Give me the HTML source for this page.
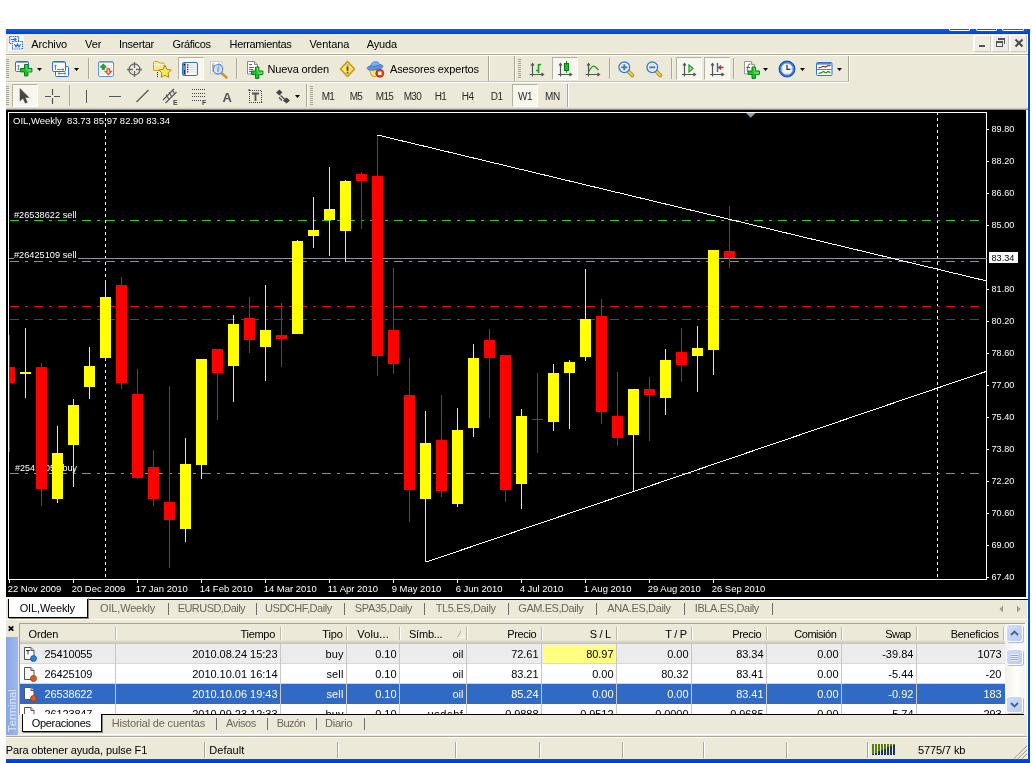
<!DOCTYPE html>
<html lang="es"><head><meta charset="utf-8"><title>MetaTrader - OIL,Weekly</title>
<style>
html,body{margin:0;padding:0}
body{width:1032px;height:763px;overflow:hidden;position:relative;background:#fff;font-family:'Liberation Sans',sans-serif;}
.t{position:absolute;white-space:pre;line-height:normal}
.r{position:absolute}
svg{position:absolute;overflow:visible}
</style></head><body>
<div id="w" style="position:absolute;left:0;top:0;width:1032px;height:763px;will-change:transform">

<div class="r" style="left:6px;top:29px;width:1024px;height:734px;background:#ece9d8;"></div>
<div class="r" style="left:6px;top:29px;width:1024px;height:5px;background:linear-gradient(#0a5cf0,#0050e0 60%,#0043c8);"></div>
<div class="r" style="left:949px;top:29px;width:21px;height:2px;background:#0b53e0;border:1px solid #fff;border-top:none;border-radius:0 0 3px 3px;box-sizing:border-box"></div>
<div class="r" style="left:976px;top:29px;width:21px;height:2px;background:#0b53e0;border:1px solid #fff;border-top:none;border-radius:0 0 3px 3px;box-sizing:border-box"></div>
<div class="r" style="left:1002px;top:29px;width:22px;height:2px;background:#c23a10;border:1px solid #fff;border-top:none;border-radius:0 0 3px 3px;box-sizing:border-box"></div>
<div class="r" style="left:1027px;top:34px;width:1px;height:725px;background:#fff;"></div>
<div class="r" style="left:1028px;top:29px;width:2px;height:734px;background:#0046e0;"></div>
<div class="r" style="left:6px;top:759px;width:1024px;height:4px;background:linear-gradient(#0a4fe6,#0038b8);"></div>
<div class="r" style="left:6px;top:53px;width:1022px;height:1px;background:#fff;"></div>
<div class="r" style="left:6px;top:54px;width:1022px;height:1px;background:#aca899;"></div>
<div class="r" style="left:6px;top:55px;width:1022px;height:1px;background:#fff;"></div>
<svg style="left:8px;top:35px" width="16" height="16" viewBox="0 0 16 16">
<rect width="16" height="16" fill="#fbfbf8"/>
<rect x="1.5" y="1.5" width="9" height="7" fill="#eef4ff" stroke="#2d6de0" stroke-width="1.200" stroke-dasharray="1.2 .6"/>
<path d="M3 4.5h5M6.5 3l1.5 1.5L6.5 6" stroke="#2d6de0" stroke-width="1.200" fill="none" stroke-width=".9"/>
<rect x="4.5" y="6.5" width="10" height="7.5" fill="#fff" stroke="#2d6de0" stroke-width="1.200" stroke-dasharray="1.2 .6"/>
<path d="M6.5 9l1.5 3 1.5-3 1.5 3 1.5-3" stroke="#2d6de0" stroke-width="1.200" fill="none" stroke-width=".9"/>
</svg>
<span class="t" style="left:31.30px;top:38px;font-size:11px;color:#000;letter-spacing:-0.140px;">Archivo</span>
<span class="t" style="left:85.00px;top:38px;font-size:11px;color:#000;letter-spacing:-0.004px;">Ver</span>
<span class="t" style="left:119.00px;top:38px;font-size:11px;color:#000;letter-spacing:-0.287px;">Insertar</span>
<span class="t" style="left:172.50px;top:38px;font-size:11px;color:#000;letter-spacing:-0.344px;">Gráficos</span>
<span class="t" style="left:229.60px;top:38px;font-size:11px;color:#000;letter-spacing:-0.360px;">Herramientas</span>
<span class="t" style="left:309.40px;top:38px;font-size:11px;color:#000;letter-spacing:-0.054px;">Ventana</span>
<span class="t" style="left:366.70px;top:38px;font-size:11px;color:#000;letter-spacing:-0.159px;">Ayuda</span>
<div class="r" style="left:973px;top:35px;width:18px;height:17px;box-sizing:border-box;background:#efede3;border:1px solid;border-color:#fff #cfccbb #cfccbb #fff;border-left-width:2px"></div>
<div class="r" style="left:979px;top:45px;width:6px;height:2px;background:#555;"></div>
<div class="r" style="left:991px;top:35px;width:18px;height:17px;box-sizing:border-box;background:#efede3;border:1px solid;border-color:#fff #cfccbb #cfccbb #fff;border-left-width:2px"></div>
<svg style="left:991px;top:35px" width="16" height="16" shape-rendering="crispEdges"><path d="M7 3h7v2h-7zM13 5h1v4h-1zM5 6h7v2h-7zM5 8h1v4h-1zM11 8h1v4h-1zM5 11h7v1h-7z" fill="#555"/></svg>
<div class="r" style="left:1009px;top:35px;width:18px;height:17px;box-sizing:border-box;background:#efede3;border:1px solid;border-color:#fff #cfccbb #cfccbb #fff;border-left-width:2px"></div>
<svg style="left:1011px;top:35px" width="16" height="16"><path d="M4.500 4.500l7 7M11.500 4.500l-7 7" stroke="#4a4a4a" stroke-width="2"/></svg>
<div class="r" style="left:6px;top:81px;width:843px;height:1px;background:#c5c2b2;"></div>
<div class="r" style="left:6px;top:82px;width:844px;height:1px;background:#fff;"></div>
<div class="r" style="left:6px;top:59px;width:3px;height:19px;background:repeating-linear-gradient(#a9a793 0 1px,#ece9d8 1px 2px)"></div>
<div class="r" style="left:6px;top:86px;width:3px;height:19px;background:repeating-linear-gradient(#a9a793 0 1px,#ece9d8 1px 2px)"></div>
<div class="r" style="left:88px;top:58px;width:1px;height:21px;background:#aca899;"></div>
<div class="r" style="left:89px;top:58px;width:1px;height:21px;background:#f3f1e6;"></div>
<div class="r" style="left:236px;top:58px;width:1px;height:21px;background:#aca899;"></div>
<div class="r" style="left:237px;top:58px;width:1px;height:21px;background:#f3f1e6;"></div>
<div class="r" style="left:488px;top:56px;width:1px;height:25px;background:#aca899;"></div>
<div class="r" style="left:489px;top:56px;width:1px;height:25px;background:#fff;"></div>
<div class="r" style="left:514px;top:56px;width:1px;height:25px;background:#aca899;"></div>
<div class="r" style="left:515px;top:56px;width:1px;height:25px;background:#fff;"></div>
<div class="r" style="left:518px;top:59px;width:3px;height:19px;background:repeating-linear-gradient(#a9a793 0 1px,#ece9d8 1px 2px)"></div>
<div class="r" style="left:609px;top:58px;width:1px;height:21px;background:#aca899;"></div>
<div class="r" style="left:610px;top:58px;width:1px;height:21px;background:#f3f1e6;"></div>
<div class="r" style="left:671px;top:58px;width:1px;height:21px;background:#aca899;"></div>
<div class="r" style="left:672px;top:58px;width:1px;height:21px;background:#f3f1e6;"></div>
<div class="r" style="left:733px;top:58px;width:1px;height:21px;background:#aca899;"></div>
<div class="r" style="left:734px;top:58px;width:1px;height:21px;background:#f3f1e6;"></div>
<div class="r" style="left:848px;top:56px;width:1px;height:26px;background:#aca899;"></div>
<div class="r" style="left:849px;top:56px;width:1px;height:26px;background:#fff;"></div>
<div class="r" style="left:69px;top:85px;width:1px;height:21px;background:#aca899;"></div>
<div class="r" style="left:70px;top:85px;width:1px;height:21px;background:#f3f1e6;"></div>
<div class="r" style="left:306px;top:84px;width:1px;height:24px;background:#aca899;"></div>
<div class="r" style="left:307px;top:84px;width:1px;height:24px;background:#fff;"></div>
<div class="r" style="left:310px;top:86px;width:3px;height:19px;background:repeating-linear-gradient(#a9a793 0 1px,#ece9d8 1px 2px)"></div>
<div class="r" style="left:567px;top:84px;width:1px;height:24px;background:#aca899;"></div>
<div class="r" style="left:568px;top:84px;width:1px;height:24px;background:#fff;"></div>
<div class="r" style="left:178px;top:57px;width:26px;height:23px;box-sizing:border-box;border:1px solid;border-color:#b5b2a0 #fff #fff #b5b2a0;background:#f7f6ef"></div>
<div class="r" style="left:552px;top:57px;width:26px;height:23px;box-sizing:border-box;border:1px solid;border-color:#b5b2a0 #fff #fff #b5b2a0;background:#f7f6ef"></div>
<div class="r" style="left:676px;top:57px;width:26px;height:23px;box-sizing:border-box;border:1px solid;border-color:#b5b2a0 #fff #fff #b5b2a0;background:#f7f6ef"></div>
<div class="r" style="left:704px;top:57px;width:26px;height:23px;box-sizing:border-box;border:1px solid;border-color:#b5b2a0 #fff #fff #b5b2a0;background:#f7f6ef"></div>
<div class="r" style="left:12px;top:84px;width:26px;height:23px;box-sizing:border-box;border:1px solid;border-color:#b5b2a0 #fff #fff #b5b2a0;background:#f7f6ef"></div>
<div class="r" style="left:512px;top:84px;width:26px;height:23px;box-sizing:border-box;border:1px solid;border-color:#b5b2a0 #fff #fff #b5b2a0;background:#f7f6ef"></div>
<svg style="left:37px;top:68px" width="5" height="3"><path d="M0 0h5L2.5 3z" fill="#000"/></svg>
<svg style="left:74px;top:68px" width="5" height="3"><path d="M0 0h5L2.5 3z" fill="#000"/></svg>
<svg style="left:763px;top:68px" width="5" height="3"><path d="M0 0h5L2.5 3z" fill="#000"/></svg>
<svg style="left:800px;top:68px" width="5" height="3"><path d="M0 0h5L2.5 3z" fill="#000"/></svg>
<svg style="left:837px;top:68px" width="5" height="3"><path d="M0 0h5L2.5 3z" fill="#000"/></svg>
<svg style="left:295px;top:95px" width="5" height="3"><path d="M0 0h5L2.5 3z" fill="#000"/></svg>
<span class="t" style="left:267.50px;top:63px;font-size:11px;color:#000;letter-spacing:-0.135px;">Nueva orden</span>
<span class="t" style="left:390.00px;top:63px;font-size:11px;color:#000;letter-spacing:-0.124px;">Asesores expertos</span>
<span class="t" style="left:321.70px;top:91px;font-size:10px;color:#2a2a2a;letter-spacing:-0.796px;">M1</span>
<span class="t" style="left:349.70px;top:91px;font-size:10px;color:#2a2a2a;letter-spacing:-0.796px;">M5</span>
<span class="t" style="left:375.80px;top:91px;font-size:10px;color:#2a2a2a;letter-spacing:-0.751px;">M15</span>
<span class="t" style="left:403.70px;top:91px;font-size:10px;color:#2a2a2a;letter-spacing:-0.718px;">M30</span>
<span class="t" style="left:434.70px;top:91px;font-size:10px;color:#2a2a2a;letter-spacing:-0.742px;">H1</span>
<span class="t" style="left:461.70px;top:91px;font-size:10px;color:#2a2a2a;letter-spacing:-0.392px;">H4</span>
<span class="t" style="left:490.80px;top:91px;font-size:10px;color:#2a2a2a;letter-spacing:-0.542px;">D1</span>
<span class="t" style="left:518.00px;top:91px;font-size:10px;color:#2a2a2a;letter-spacing:-0.500px;">W1</span>
<span class="t" style="left:545.00px;top:91px;font-size:10px;color:#2a2a2a;letter-spacing:-0.426px;">MN</span>
<svg style="left:15px;top:60px" width="18" height="18" viewBox="0 0 18 18"><rect x=".5" y="1.5" width="13" height="10" rx="1" fill="#fff" stroke="#2f6fcc"/><rect x="1" y="2" width="12" height="1" fill="#7aa8ea"/><path d="M3.5 5v5M2.3 6.3l1.2-1.3 1.2 1.3M2.3 8.8l1.2 1.2 1.2-1.2" stroke="#5577aa" fill="none" stroke-width=".9"/><g transform="translate(5.5 4.5) scale(1)"><path d="M4 0h3.400v4H11.400v3.400H7.400v4H4v-4H0V4h4z" fill="#1fc02a" stroke="#0b7d14" stroke-width="1" stroke-linejoin="round"/><path d="M5 1.200h1.400v4H10.400v1.400H6.400" fill="none" stroke="#7dfa86" stroke-width=".9" opacity=".8"/></g></svg>
<svg style="left:52px;top:60px" width="18" height="18" viewBox="0 0 18 18"><rect x="3.5" y="6.5" width="13" height="10" rx="1" fill="#fff" stroke="#2f6fcc"/><rect x=".5" y="1.5" width="13" height="10" rx="1" fill="#fff" stroke="#2f6fcc"/><rect x="1" y="2" width="12" height="1" fill="#7aa8ea"/><path d="M3.5 5v5M2.3 6.2l1.2-1.2 1.2 1.2M5 9.5h7M10.5 8.3l1.5 1.2-1.5 1.2M6 13.5h8M7.5 12.3L6 13.5l1.500 1.2M12.5 12.300l1.500 1.2-1.500 1.2" stroke="#5577aa" fill="none" stroke-width=".9"/></svg>
<svg style="left:98px;top:60px" width="17" height="18" viewBox="0 0 17 18"><rect x=".5" y="1.500" width="15" height="15" rx="1.500" fill="#fff" stroke="#5a97e6"/><rect x="1" y="2" width="14" height="1" fill="#8db7f0"/><path d="M9 5.500h5M9 7.500h5M2 11.500h5M2 13.500h5M9 13.500h5" stroke="#d8d8d8" stroke-width=".8" stroke-dasharray="2 1"/><path d="M5.300 3.800l3.200 3.400h-1.900v2.300h-2.600v-2.300h-1.900z" fill="#1fa82a" stroke="#0a7a12" stroke-width=".6"/><path d="M10.300 14.600l-3.200-3.400h1.900v-2.300h2.600v2.300h1.900z" fill="#f6c8b4" stroke="#e04a1a" stroke-width="1.100"/></svg>
<svg style="left:126px;top:61px" width="17" height="17" viewBox="0 0 17 17"><circle cx="8.500" cy="8.500" r="5.500" fill="none" stroke="#6a6a6a" stroke-width="1.300"/><path d="M8.500 1v6M8.500 10v6M1 8.500h6M10 8.500h6" stroke="#6a6a6a" stroke-width="1.300"/></svg>
<svg style="left:153px;top:60px" width="19" height="18" viewBox="0 0 19 18"><path d="M.5 10.500v-8q0-1 1-1h3.500l1.500 1.500h3.500q1 0 1 1v6.500z" fill="#ffe98a" stroke="#c9a227"/><path d="M1 4.500h9.500" stroke="#fff8d0"/><path d="M4.500 12v5.500" stroke="#222" stroke-dasharray="1 1"/><path d="M12 5.500l1.900 3.900 4.300.6-3.100 3 .7 4.300-3.800-2-3.800 2 .7-4.300-3.100-3 4.300-.6z" fill="#ffe95a" stroke="#b8860b" stroke-width="1"/></svg>
<svg style="left:182px;top:62px" width="16" height="14" viewBox="0 0 16 14"><rect x=".5" y=".5" width="15" height="13" rx="1.500" fill="#fff" stroke="#2f6fd0"/><rect x="1" y="1" width="3" height="12" fill="#5a92e2"/><path d="M4.500 3h10.500M4.500 5.300h10.500M4.500 7.600h10.500M4.500 9.900h10.500" stroke="#b4ccf6" stroke-width=".7"/><rect x="1.800" y="2" width="1.300" height="1.300" fill="#000"/><rect x="5" y="2.200" width="1.400" height="1.400" fill="#e00"/><rect x="5" y="4.500" width="1.300" height="1.300" fill="#222"/><rect x="5" y="6.800" width="1.300" height="1.300" fill="#222"/><rect x="5" y="9.100" width="1.400" height="1.400" fill="#e00"/><rect x="2" y="8" width="1" height="4" fill="#234"/></svg>
<svg style="left:210px;top:60px" width="19" height="19" viewBox="0 0 19 19"><rect x=".5" y="1.500" width="11.500" height="12.500" fill="#fbfbfb" stroke="#cdcdc8"/><path d="M3 3v9M9 3v8M2 6h3M8 4.500h3" stroke="#7788aa" stroke-width=".9"/><path d="M12 13.500l4.500 4" stroke="#c79a2a" stroke-width="2.600" stroke-linecap="round"/><circle cx="8" cy="9.300" r="4.700" fill="#cfe0fa" fill-opacity=".85" stroke="#5a92e2" stroke-width="1.300"/><rect x="7" y="6.500" width="2.200" height="5.500" fill="#9ab0d8"/></svg>
<svg style="left:246px;top:60px" width="18" height="19" viewBox="0 0 18 19"><path d="M1.500 1.500h7l3 3v9.500h-10z" fill="#fff" stroke="#888"/><path d="M8.500 1.500v3h3" fill="#ddd" stroke="#888"/><path d="M3 4.500h3M3 7.500h5M3 9.500h4M3 11.500h2" stroke="#666" stroke-width="1"/><g transform="translate(5.5 7) scale(1)"><path d="M4 0h3.400v4H11.400v3.400H7.400v4H4v-4H0V4h4z" fill="#1fc02a" stroke="#0b7d14" stroke-width="1" stroke-linejoin="round"/><path d="M5 1.200h1.400v4H10.400v1.400H6.400" fill="none" stroke="#7dfa86" stroke-width=".9" opacity=".8"/></g></svg>
<svg style="left:339px;top:60px" width="17" height="18" viewBox="0 0 17 18"><path d="M8.500 1.500l7 7.500-7 7.500-7-7.500z" fill="#f7e254" stroke="#c29c1c" stroke-width="1.700" stroke-linejoin="round"/><path d="M8.500 3.800l4.800 5.200-4.800 5.200-4.800-5.200z" fill="none" stroke="#fff6b0" stroke-width=".7"/><rect x="7.700" y="4.300" width="1.700" height="2.500" fill="#999"/><rect x="7.700" y="6.800" width="1.700" height="4" fill="#8a2a1a"/><rect x="7.700" y="11.800" width="1.700" height="1.800" fill="#8a2a1a"/></svg>
<svg style="left:366px;top:60px" width="19" height="19" viewBox="0 0 19 19"><path d="M2.500 8.500h11l-3.500 7.500q-2 1.500-4 0z" fill="#fbe670" stroke="#c9a227"/><ellipse cx="9" cy="7.300" rx="8" ry="2.700" fill="#5a94e0" stroke="#3c78cc" stroke-width=".8" transform="rotate(-8 9 7.300)"/><path d="M5 6.500q0-4.500 4.200-4.800t4.300 3.800z" fill="#7fb0ee" stroke="#3c78cc" stroke-width=".8"/><circle cx="13.800" cy="13.300" r="4" fill="#e8401a" stroke="#b03008" stroke-width=".8"/><rect x="12.100" y="11.600" width="3.400" height="3.400" fill="#fff"/></svg>
<svg style="left:529px;top:61px" width="16" height="16" viewBox="0 0 16 16"><path d="M3.500 2.500v13M1 13.500h13.500M2 4.500l1.500-2 1.500 2M12.500 12l2 1.500-2 1.500" stroke="#555" fill="none" stroke-width="1.200"/><path d="M9.500 3v9M9.500 3.500h2.500M7 9.500h2.500" stroke="#18a020" stroke-width="1.600" fill="none"/></svg>
<svg style="left:557px;top:61px" width="16" height="16" viewBox="0 0 16 16"><path d="M3.500 2.500v13M1 13.500h13.500M2 4.500l1.500-2 1.500 2M12.500 12l2 1.500-2 1.500" stroke="#555" fill="none" stroke-width="1.200"/><path d="M9.500 0v12" stroke="#18a020" stroke-width="1.200"/><rect x="7.500" y="2.500" width="4" height="7" fill="#22b82c" stroke="#0a7a12"/></svg>
<svg style="left:585px;top:61px" width="16" height="16" viewBox="0 0 16 16"><path d="M3.500 2.500v13M1 13.500h13.500M2 4.500l1.500-2 1.500 2M12.500 12l2 1.500-2 1.500" stroke="#555" fill="none" stroke-width="1.200"/><path d="M3.500 11q4-7.500 6.500-5.500l3.500 3.500" stroke="#18a020" stroke-width="1.300" fill="none"/></svg>
<svg style="left:618px;top:60px" width="18" height="18" viewBox="0 0 18 18"><path d="M10.500 11.500l3.800 3.800" stroke="#a8821a" stroke-width="3.800" stroke-linecap="round"/><path d="M10.500 11.500l3.800 3.800" stroke="#f0d040" stroke-width="2.200" stroke-linecap="round"/><circle cx="6.300" cy="7.300" r="5.300" fill="#dbe7fb" stroke="#3a7ae0" stroke-width="1.400"/><circle cx="6.300" cy="7.300" r="4" fill="none" stroke="#f4f8ff" stroke-width=".8"/><path d="M3.300 7.300h6" stroke="#4a7a98" stroke-width="1.800"/><path d="M6.300 4.300v6" stroke="#4a7a98" stroke-width="1.800"/></svg>
<svg style="left:646px;top:60px" width="18" height="18" viewBox="0 0 18 18"><path d="M10.500 11.500l3.800 3.800" stroke="#a8821a" stroke-width="3.800" stroke-linecap="round"/><path d="M10.500 11.500l3.800 3.800" stroke="#f0d040" stroke-width="2.200" stroke-linecap="round"/><circle cx="6.300" cy="7.300" r="5.300" fill="#dbe7fb" stroke="#3a7ae0" stroke-width="1.400"/><circle cx="6.300" cy="7.300" r="4" fill="none" stroke="#f4f8ff" stroke-width=".8"/><path d="M3.300 7.300h6" stroke="#4a7a98" stroke-width="1.800"/></svg>
<svg style="left:681px;top:61px" width="16" height="16" viewBox="0 0 16 16"><path d="M3.500 2.500v13M1 13.500h13.500M2 4.500l1.500-2 1.500 2M12.500 12l2 1.500-2 1.500" stroke="#555" fill="none" stroke-width="1.200"/><path d="M8 4l4 3.500-4 3.500z" fill="#bfe8c0" stroke="#18a020" stroke-width="1.200"/></svg>
<svg style="left:709px;top:61px" width="16" height="16" viewBox="0 0 16 16"><path d="M3.500 2.500v13M1 13.500h13.500M2 4.500l1.500-2 1.500 2M12.500 12l2 1.500-2 1.500" stroke="#555" fill="none" stroke-width="1.200"/><path d="M8.500 2v9" stroke="#2a6ab0" stroke-width="1.400"/><path d="M14.500 6.500h-4.500M12 4.500l-2.200 2 2.200 2" stroke="#c03010" stroke-width="1.300" fill="none"/></svg>
<svg style="left:743px;top:60px" width="18" height="19" viewBox="0 0 18 19"><path d="M1.500 1.500h7l3 3v9.500h-10z" fill="#fff" stroke="#999"/><path d="M8.500 1.500v3h3" fill="#e4e4e4" stroke="#999"/><path d="M5 11.500q-1.500 0-.5-3l.8-3q.6-2 2.200-1.500M3.500 7.500h3.500" stroke="#555" fill="none" stroke-width="1"/><g transform="translate(5 7) scale(1)"><path d="M4 0h3.400v4H11.400v3.400H7.400v4H4v-4H0V4h4z" fill="#1fc02a" stroke="#0b7d14" stroke-width="1" stroke-linejoin="round"/><path d="M5 1.200h1.400v4H10.400v1.400H6.400" fill="none" stroke="#7dfa86" stroke-width=".9" opacity=".8"/></g></svg>
<svg style="left:778px;top:60px" width="18" height="18" viewBox="0 0 18 18"><circle cx="9" cy="9" r="8" fill="#2f74e0" stroke="#1a4fb0"/><circle cx="9" cy="9" r="5.800" fill="#f4f6fb" stroke="#9ab8ee" stroke-width=".8"/><path d="M9 5v4.300h3.300" stroke="#333" stroke-width="1.200" fill="none"/><path d="M9 3.600v.8M9 13.600v.8M3.600 9h.8M13.600 9h.8" stroke="#666" stroke-width=".8"/></svg>
<svg style="left:816px;top:62px" width="17" height="14" viewBox="0 0 17 14"><rect x=".5" y=".5" width="15.500" height="13" rx="1" fill="#fff" stroke="#3472cc"/><rect x="1" y="1" width="14.500" height="1.600" fill="#4f86d8"/><path d="M1 7.500h14.500" stroke="#3472cc" stroke-width=".9"/><path d="M2.500 5.800l2.500-.5 2-1 2.500.8 2-1.300 3-.3" stroke="#a02818" stroke-width="1.200" fill="none"/><path d="M2.500 11.500l3-.8 2-1.300 2.500 1.600 2-1.600 2.500 1.200" stroke="#18901e" stroke-width="1.200" fill="none"/></svg>
<svg style="left:18px;top:88px" width="12" height="16" viewBox="0 0 12 16"><path d="M2 .5v12.500l3-2.800 2.300 5 2-1-2.300-4.700h4z" fill="#444" stroke="#444" stroke-width=".5" stroke-linejoin="round"/></svg>
<svg style="left:45px;top:89px" width="15" height="15" viewBox="0 0 15 15"><path d="M7.500 0v6M7.500 9v6M0 7.500h6M9 7.500h6" stroke="#555" stroke-width="1.200"/></svg>
<div class="r" style="left:86px;top:90px;width:1px;height:13px;background:#555;"></div>
<div class="r" style="left:109px;top:96px;width:12px;height:1px;background:#555;"></div>
<svg style="left:136px;top:89px" width="13" height="14" viewBox="0 0 13 14"><path d="M.5 13L12.500 1" stroke="#555" stroke-width="1.200"/></svg>
<svg style="left:162px;top:88px" width="18" height="18" viewBox="0 0 18 18"><path d="M1 12L12 1M3.500 15L14.500 4M4 6.500l3 5M7 4l3 5M10 1.500l3 5" stroke="#555" stroke-width="1.100" fill="none"/><text x="11" y="17" font-size="7" font-weight="bold" fill="#444" font-family="Liberation Sans,sans-serif">E</text></svg>
<svg style="left:191px;top:88px" width="18" height="18" viewBox="0 0 18 18"><path d="M1 1.500h14M1 5.500h14M1 8.500h14M1 12.500h9" stroke="#444" stroke-width="1" stroke-dasharray="1 1" shape-rendering="crispEdges"/><text x="11" y="17" font-size="7" font-weight="bold" fill="#444" font-family="Liberation Sans,sans-serif">F</text></svg>
<span class="t" style="left:222.50px;top:90px;font-size:13px;color:#555;font-weight:bold;">A</span>
<svg style="left:248px;top:88px" width="14" height="16" viewBox="0 0 14 16"><rect x="1.500" y="2.500" width="12" height="12" fill="none" stroke="#444" stroke-width="1" stroke-dasharray="1 1" shape-rendering="crispEdges"/><rect x=".3" y="1.300" width="1.700" height="1.700" fill="#555"/><path d="M4 5.500h7M7.500 5v8" stroke="#555" stroke-width="1.800"/></svg>
<svg style="left:275px;top:89px" width="16" height="15" viewBox="0 0 16 15"><path d="M1 3.500l3.500-3 3 3-3.200 3zM8 11.500l3.500-3 3.500 3-3.500 3z" fill="#444"/><path d="M4 8.500l3 3M5.500 6.500l4.500 4" stroke="#444" stroke-width="1.200"/></svg>
<div class="r" style="left:6px;top:107px;width:1022px;height:1px;background:#e6e3d2;"></div>
<div class="r" style="left:6px;top:108px;width:1022px;height:1px;background:#cfccbb;"></div>
<div class="r" style="left:6px;top:109px;width:1022px;height:1px;background:#8a887a;"></div>
<div class="r" style="left:6px;top:110px;width:1020px;height:487px;background:#000;"></div>
<svg style="left:0;top:0" width="1032" height="763" viewBox="0 0 1032 763">
<defs><clipPath id="cc"><rect x="9" y="113" width="977" height="466"/></clipPath></defs>
<g shape-rendering="crispEdges">
<path d="M8.5 112v467.500M8 112.500h979M986.500 112v467.500M8 579.500h979" stroke="#fff" fill="none"/>
<path d="M105.5 112V579" stroke="#fff" stroke-dasharray="3 3" fill="none"/>
<path d="M937.5 112V579" stroke="#fff" stroke-dasharray="3 3" fill="none"/>
<path d="M10 220.5H980" stroke="#32cd32" stroke-dasharray="9 6 3 6" fill="none"/>
<path d="M10 261.5H980" stroke="#32cd32" stroke-dasharray="9 6 3 6" fill="none"/>
<path d="M10 473.5H980" stroke="#32cd32" stroke-dasharray="9 6 3 6" fill="none"/>
<path d="M10 306.5H980" stroke="#ff0000" stroke-dasharray="9 6 3 6" fill="none"/>
<path d="M10 319.5H980" stroke="#ff0000" stroke-dasharray="9 6 3 6" fill="none"/>
<path d="M9 258.500H987" stroke="#8a96a4" fill="none"/>
<rect x="14" y="249" width="64" height="11" fill="#000"/>
</g>
<text x="13" y="124" style="white-space:pre" font-family="Liberation Sans,sans-serif" font-size="9.800" fill="#fff" textLength="157" lengthAdjust="spacingAndGlyphs">OIL,Weekly  83.73 85.97 82.90 83.34</text>
<text x="14" y="218" style="white-space:pre" font-family="Liberation Sans,sans-serif" font-size="9.800" fill="#fff" textLength="62.5" lengthAdjust="spacingAndGlyphs">#26538622 sell</text>
<text x="14" y="258" style="white-space:pre" font-family="Liberation Sans,sans-serif" font-size="9.800" fill="#fff" textLength="62.5" lengthAdjust="spacingAndGlyphs">#26425109 sell</text>
<text x="15" y="471" style="white-space:pre" font-family="Liberation Sans,sans-serif" font-size="9.800" fill="#fff" textLength="62" lengthAdjust="spacingAndGlyphs">#25410055 buy</text>
<g shape-rendering="crispEdges" clip-path="url(#cc)">
<rect x="9" y="335" width="1" height="117" fill="#ff0000"/>
<rect x="4" y="367" width="11" height="16" fill="#ff0000"/>
<rect x="25" y="328" width="1" height="70" fill="#ffff00"/>
<rect x="20" y="372" width="11" height="2" fill="#ffff00"/>
<rect x="41" y="363" width="1" height="143" fill="#ff0000"/>
<rect x="36" y="367" width="11" height="122" fill="#ff0000"/>
<rect x="57" y="426" width="1" height="77" fill="#ffff00"/>
<rect x="52" y="453" width="11" height="46" fill="#ffff00"/>
<rect x="73" y="399" width="1" height="88" fill="#ffff00"/>
<rect x="68" y="405" width="11" height="40" fill="#ffff00"/>
<rect x="89" y="347" width="1" height="52" fill="#ffff00"/>
<rect x="84" y="366" width="11" height="21" fill="#ffff00"/>
<rect x="105" y="280" width="1" height="81" fill="#ffff00"/>
<rect x="100" y="297" width="11" height="61" fill="#ffff00"/>
<rect x="121" y="277" width="1" height="112" fill="#ff0000"/>
<rect x="116" y="285" width="11" height="98" fill="#ff0000"/>
<rect x="137" y="369" width="1" height="110" fill="#ff0000"/>
<rect x="132" y="394" width="11" height="84" fill="#ff0000"/>
<rect x="153" y="450" width="1" height="56" fill="#ff0000"/>
<rect x="148" y="467" width="11" height="32" fill="#ff0000"/>
<rect x="169" y="386" width="1" height="182" fill="#ff0000"/>
<rect x="164" y="502" width="11" height="18" fill="#ff0000"/>
<rect x="185" y="438" width="1" height="104" fill="#ffff00"/>
<rect x="180" y="464" width="11" height="65" fill="#ffff00"/>
<rect x="201" y="359" width="1" height="120" fill="#ffff00"/>
<rect x="196" y="359" width="11" height="106" fill="#ffff00"/>
<rect x="217" y="349" width="1" height="71" fill="#ff0000"/>
<rect x="212" y="349" width="11" height="24" fill="#ff0000"/>
<rect x="233" y="315" width="1" height="87" fill="#ffff00"/>
<rect x="228" y="324" width="11" height="42" fill="#ffff00"/>
<rect x="249" y="297" width="1" height="56" fill="#ff0000"/>
<rect x="244" y="318" width="11" height="22" fill="#ff0000"/>
<rect x="265" y="285" width="1" height="96" fill="#ffff00"/>
<rect x="260" y="330" width="11" height="17" fill="#ffff00"/>
<rect x="281" y="303" width="1" height="64" fill="#ff0000"/>
<rect x="276" y="335" width="11" height="4" fill="#ff0000"/>
<rect x="297" y="240" width="1" height="94" fill="#ffff00"/>
<rect x="292" y="241" width="11" height="93" fill="#ffff00"/>
<rect x="313" y="197" width="1" height="51" fill="#ffff00"/>
<rect x="308" y="230" width="11" height="6" fill="#ffff00"/>
<rect x="329" y="167" width="1" height="89" fill="#ffff00"/>
<rect x="324" y="209" width="11" height="11" fill="#ffff00"/>
<rect x="345" y="180" width="1" height="82" fill="#ffff00"/>
<rect x="340" y="181" width="11" height="50" fill="#ffff00"/>
<rect x="361" y="172" width="1" height="57" fill="#ff0000"/>
<rect x="356" y="174" width="11" height="7" fill="#ff0000"/>
<rect x="377" y="135" width="1" height="241" fill="#ff0000"/>
<rect x="372" y="176" width="11" height="180" fill="#ff0000"/>
<rect x="393" y="268" width="1" height="106" fill="#ff0000"/>
<rect x="388" y="330" width="11" height="34" fill="#ff0000"/>
<rect x="409" y="358" width="1" height="164" fill="#ff0000"/>
<rect x="404" y="395" width="11" height="95" fill="#ff0000"/>
<rect x="425" y="411" width="1" height="151" fill="#ffff00"/>
<rect x="420" y="443" width="11" height="56" fill="#ffff00"/>
<rect x="441" y="395" width="1" height="102" fill="#ff0000"/>
<rect x="436" y="440" width="11" height="51" fill="#ff0000"/>
<rect x="457" y="408" width="1" height="99" fill="#ffff00"/>
<rect x="452" y="430" width="11" height="74" fill="#ffff00"/>
<rect x="473" y="344" width="1" height="93" fill="#ffff00"/>
<rect x="468" y="358" width="11" height="70" fill="#ffff00"/>
<rect x="489" y="329" width="1" height="89" fill="#ff0000"/>
<rect x="484" y="340" width="11" height="18" fill="#ff0000"/>
<rect x="505" y="355" width="1" height="147" fill="#ff0000"/>
<rect x="500" y="355" width="11" height="135" fill="#ff0000"/>
<rect x="521" y="409" width="1" height="100" fill="#ffff00"/>
<rect x="516" y="416" width="11" height="68" fill="#ffff00"/>
<rect x="537" y="373" width="1" height="80" fill="#ff0000"/>
<rect x="532" y="419" width="11" height="1" fill="#ff0000"/>
<rect x="553" y="364" width="1" height="67" fill="#ffff00"/>
<rect x="548" y="373" width="11" height="49" fill="#ffff00"/>
<rect x="569" y="360" width="1" height="69" fill="#ffff00"/>
<rect x="564" y="362" width="11" height="11" fill="#ffff00"/>
<rect x="585" y="269" width="1" height="92" fill="#ffff00"/>
<rect x="580" y="319" width="11" height="38" fill="#ffff00"/>
<rect x="601" y="299" width="1" height="125" fill="#ff0000"/>
<rect x="596" y="316" width="11" height="96" fill="#ff0000"/>
<rect x="617" y="372" width="1" height="74" fill="#ff0000"/>
<rect x="612" y="416" width="11" height="22" fill="#ff0000"/>
<rect x="633" y="389" width="1" height="103" fill="#ffff00"/>
<rect x="628" y="389" width="11" height="46" fill="#ffff00"/>
<rect x="649" y="377" width="1" height="64" fill="#ff0000"/>
<rect x="644" y="389" width="11" height="6" fill="#ff0000"/>
<rect x="665" y="349" width="1" height="66" fill="#ffff00"/>
<rect x="660" y="360" width="11" height="38" fill="#ffff00"/>
<rect x="681" y="328" width="1" height="54" fill="#ff0000"/>
<rect x="676" y="352" width="11" height="13" fill="#ff0000"/>
<rect x="697" y="326" width="1" height="66" fill="#ffff00"/>
<rect x="692" y="348" width="11" height="8" fill="#ffff00"/>
<rect x="713" y="250" width="1" height="125" fill="#ffff00"/>
<rect x="708" y="250" width="11" height="100" fill="#ffff00"/>
<rect x="729" y="206" width="1" height="62" fill="#ff0000"/>
<rect x="724" y="251" width="11" height="7" fill="#ff0000"/>
</g>
<path d="M377.500 135L986 280.800M425.500 562.300L986 371.500" stroke="#fff" stroke-width="1" fill="none" shape-rendering="crispEdges"/>
<path d="M746 113h9.500l-4.750 4.800z" fill="#8f9db0"/>
<g shape-rendering="crispEdges">
<rect x="987" y="129" width="2" height="1" fill="#fff"/>
<rect x="987" y="161" width="2" height="1" fill="#fff"/>
<rect x="987" y="193" width="2" height="1" fill="#fff"/>
<rect x="987" y="225" width="2" height="1" fill="#fff"/>
<rect x="987" y="289" width="2" height="1" fill="#fff"/>
<rect x="987" y="321" width="2" height="1" fill="#fff"/>
<rect x="987" y="353" width="2" height="1" fill="#fff"/>
<rect x="987" y="385" width="2" height="1" fill="#fff"/>
<rect x="987" y="417" width="2" height="1" fill="#fff"/>
<rect x="987" y="449" width="2" height="1" fill="#fff"/>
<rect x="987" y="481" width="2" height="1" fill="#fff"/>
<rect x="987" y="513" width="2" height="1" fill="#fff"/>
<rect x="987" y="545" width="2" height="1" fill="#fff"/>
<rect x="987" y="577" width="2" height="1" fill="#fff"/>
<rect x="989" y="252" width="29" height="11" fill="#fff"/>
<rect x="9" y="580" width="1" height="3" fill="#fff"/>
<rect x="73" y="580" width="1" height="3" fill="#fff"/>
<rect x="137" y="580" width="1" height="3" fill="#fff"/>
<rect x="201" y="580" width="1" height="3" fill="#fff"/>
<rect x="265" y="580" width="1" height="3" fill="#fff"/>
<rect x="329" y="580" width="1" height="3" fill="#fff"/>
<rect x="393" y="580" width="1" height="3" fill="#fff"/>
<rect x="457" y="580" width="1" height="3" fill="#fff"/>
<rect x="521" y="580" width="1" height="3" fill="#fff"/>
<rect x="585" y="580" width="1" height="3" fill="#fff"/>
<rect x="649" y="580" width="1" height="3" fill="#fff"/>
<rect x="713" y="580" width="1" height="3" fill="#fff"/>
</g>
<text x="991.5" y="132" style="white-space:pre" font-family="Liberation Sans,sans-serif" font-size="9.800" fill="#fff" textLength="22.8" lengthAdjust="spacingAndGlyphs">89.80</text>
<text x="991.5" y="164" style="white-space:pre" font-family="Liberation Sans,sans-serif" font-size="9.800" fill="#fff" textLength="22.8" lengthAdjust="spacingAndGlyphs">88.20</text>
<text x="991.5" y="196" style="white-space:pre" font-family="Liberation Sans,sans-serif" font-size="9.800" fill="#fff" textLength="22.8" lengthAdjust="spacingAndGlyphs">86.60</text>
<text x="991.5" y="228" style="white-space:pre" font-family="Liberation Sans,sans-serif" font-size="9.800" fill="#fff" textLength="22.8" lengthAdjust="spacingAndGlyphs">85.00</text>
<text x="991.5" y="292" style="white-space:pre" font-family="Liberation Sans,sans-serif" font-size="9.800" fill="#fff" textLength="22.8" lengthAdjust="spacingAndGlyphs">81.80</text>
<text x="991.5" y="324" style="white-space:pre" font-family="Liberation Sans,sans-serif" font-size="9.800" fill="#fff" textLength="22.8" lengthAdjust="spacingAndGlyphs">80.20</text>
<text x="991.5" y="356" style="white-space:pre" font-family="Liberation Sans,sans-serif" font-size="9.800" fill="#fff" textLength="22.8" lengthAdjust="spacingAndGlyphs">78.60</text>
<text x="991.5" y="388" style="white-space:pre" font-family="Liberation Sans,sans-serif" font-size="9.800" fill="#fff" textLength="22.8" lengthAdjust="spacingAndGlyphs">77.00</text>
<text x="991.5" y="420" style="white-space:pre" font-family="Liberation Sans,sans-serif" font-size="9.800" fill="#fff" textLength="22.8" lengthAdjust="spacingAndGlyphs">75.40</text>
<text x="991.5" y="452" style="white-space:pre" font-family="Liberation Sans,sans-serif" font-size="9.800" fill="#fff" textLength="22.8" lengthAdjust="spacingAndGlyphs">73.80</text>
<text x="991.5" y="484" style="white-space:pre" font-family="Liberation Sans,sans-serif" font-size="9.800" fill="#fff" textLength="22.8" lengthAdjust="spacingAndGlyphs">72.20</text>
<text x="991.5" y="516" style="white-space:pre" font-family="Liberation Sans,sans-serif" font-size="9.800" fill="#fff" textLength="22.8" lengthAdjust="spacingAndGlyphs">70.60</text>
<text x="991.5" y="548" style="white-space:pre" font-family="Liberation Sans,sans-serif" font-size="9.800" fill="#fff" textLength="22.8" lengthAdjust="spacingAndGlyphs">69.00</text>
<text x="991.5" y="580" style="white-space:pre" font-family="Liberation Sans,sans-serif" font-size="9.800" fill="#fff" textLength="22.8" lengthAdjust="spacingAndGlyphs">67.40</text>
<text x="991.5" y="261" style="white-space:pre" font-family="Liberation Sans,sans-serif" font-size="9.800" fill="#000" textLength="22.8" lengthAdjust="spacingAndGlyphs">83.34</text>
<text x="7.7" y="592" style="white-space:pre" font-family="Liberation Sans,sans-serif" font-size="9.800" fill="#fff" textLength="53.7" lengthAdjust="spacingAndGlyphs">22 Nov 2009</text>
<text x="71.7" y="592" style="white-space:pre" font-family="Liberation Sans,sans-serif" font-size="9.800" fill="#fff" textLength="53.7" lengthAdjust="spacingAndGlyphs">20 Dec 2009</text>
<text x="135.7" y="592" style="white-space:pre" font-family="Liberation Sans,sans-serif" font-size="9.800" fill="#fff" textLength="52.1" lengthAdjust="spacingAndGlyphs">17 Jan 2010</text>
<text x="199.7" y="592" style="white-space:pre" font-family="Liberation Sans,sans-serif" font-size="9.800" fill="#fff" textLength="53.2" lengthAdjust="spacingAndGlyphs">14 Feb 2010</text>
<text x="263.7" y="592" style="white-space:pre" font-family="Liberation Sans,sans-serif" font-size="9.800" fill="#fff" textLength="53.2" lengthAdjust="spacingAndGlyphs">14 Mar 2010</text>
<text x="327.7" y="592" style="white-space:pre" font-family="Liberation Sans,sans-serif" font-size="9.800" fill="#fff" textLength="50.4" lengthAdjust="spacingAndGlyphs">11 Apr 2010</text>
<text x="391.7" y="592" style="white-space:pre" font-family="Liberation Sans,sans-serif" font-size="9.800" fill="#fff" textLength="49.5" lengthAdjust="spacingAndGlyphs">9 May 2010</text>
<text x="455.7" y="592" style="white-space:pre" font-family="Liberation Sans,sans-serif" font-size="9.800" fill="#fff" textLength="46.9" lengthAdjust="spacingAndGlyphs">6 Jun 2010</text>
<text x="519.7" y="592" style="white-space:pre" font-family="Liberation Sans,sans-serif" font-size="9.800" fill="#fff" textLength="43.7" lengthAdjust="spacingAndGlyphs">4 Jul 2010</text>
<text x="583.7" y="592" style="white-space:pre" font-family="Liberation Sans,sans-serif" font-size="9.800" fill="#fff" textLength="47.9" lengthAdjust="spacingAndGlyphs">1 Aug 2010</text>
<text x="647.7" y="592" style="white-space:pre" font-family="Liberation Sans,sans-serif" font-size="9.800" fill="#fff" textLength="53.2" lengthAdjust="spacingAndGlyphs">29 Aug 2010</text>
<text x="711.7" y="592" style="white-space:pre" font-family="Liberation Sans,sans-serif" font-size="9.800" fill="#fff" textLength="53.7" lengthAdjust="spacingAndGlyphs">26 Sep 2010</text>
</svg>
<div class="r" style="left:6px;top:597px;width:1021px;height:22px;background:#ece9d8;"></div>
<div class="r" style="left:6px;top:597px;width:1021px;height:2px;background:#fff;"></div>
<div class="r" style="left:88px;top:599px;width:940px;height:1px;background:#000;"></div>
<div class="r" style="left:8px;top:597px;width:80px;height:21px;box-sizing:border-box;background:#fff;border:1px solid #000;border-top:none;box-shadow:1px 1px 0 #8a8a80"></div>
<div class="r" style="left:8px;top:597px;width:1px;height:2px;background:#fff;"></div>
<div class="r" style="left:87px;top:597px;width:1px;height:2px;background:#fff;"></div>
<span class="t" style="left:19.70px;top:602px;font-size:11px;color:#000;letter-spacing:-0.135px;">OIL,Weekly</span>
<span class="t" style="left:100.00px;top:602px;font-size:11px;color:#6a6659;letter-spacing:-0.165px;">OIL,Weekly</span>
<span class="t" style="left:177.70px;top:602px;font-size:11px;color:#6a6659;letter-spacing:-0.555px;">EURUSD,Daily</span>
<span class="t" style="left:265.00px;top:602px;font-size:11px;color:#6a6659;letter-spacing:-0.452px;">USDCHF,Daily</span>
<span class="t" style="left:354.70px;top:602px;font-size:11px;color:#6a6659;letter-spacing:-0.303px;">SPA35,Daily</span>
<span class="t" style="left:435.70px;top:602px;font-size:11px;color:#6a6659;letter-spacing:-0.349px;">TL5.ES,Daily</span>
<span class="t" style="left:518.30px;top:602px;font-size:11px;color:#6a6659;letter-spacing:-0.441px;">GAM.ES,Daily</span>
<span class="t" style="left:607.30px;top:602px;font-size:11px;color:#6a6659;letter-spacing:-0.371px;">ANA.ES,Daily</span>
<span class="t" style="left:694.70px;top:602px;font-size:11px;color:#6a6659;letter-spacing:-0.368px;">IBLA.ES,Daily</span>
<div class="r" style="left:168px;top:603px;width:1px;height:12px;background:#6d6d6d;"></div>
<div class="r" style="left:256px;top:603px;width:1px;height:12px;background:#6d6d6d;"></div>
<div class="r" style="left:344px;top:603px;width:1px;height:12px;background:#6d6d6d;"></div>
<div class="r" style="left:424px;top:603px;width:1px;height:12px;background:#6d6d6d;"></div>
<div class="r" style="left:508px;top:603px;width:1px;height:12px;background:#6d6d6d;"></div>
<div class="r" style="left:596px;top:603px;width:1px;height:12px;background:#6d6d6d;"></div>
<div class="r" style="left:684px;top:603px;width:1px;height:12px;background:#6d6d6d;"></div>
<div class="r" style="left:772px;top:603px;width:1px;height:12px;background:#6d6d6d;"></div>
<svg style="left:999px;top:605px" width="24" height="9"><path d="M4 .5v7L.5 4zM18 .5v7l3.500-3.500z" fill="#9c9a92"/></svg>
<div class="r" style="left:6px;top:619px;width:1021px;height:1px;background:#fff;"></div>
<div class="r" style="left:6px;top:620px;width:1021px;height:116px;background:#ece9d8;"></div>
<svg style="left:8px;top:626px" width="6" height="5"><path d="M.7.300l4.600 4.400M5.300.300L.7 4.700" stroke="#000" stroke-width="1.700"/></svg>
<div class="r" style="left:6px;top:637px;width:12px;height:98px;background:linear-gradient(90deg,#89a7e6,#9fb8ec);"></div>
<span class="t" style="left:6px;top:732px;font-size:11px;color:#dde7fa;transform-origin:0 0;transform:rotate(-90deg);letter-spacing:.15px">Terminal</span>
<div class="r" style="left:19px;top:623px;width:1006px;height:1px;background:#a5a290;"></div>
<div class="r" style="left:19px;top:623px;width:1px;height:92px;background:#a5a290;"></div>
<div class="r" style="left:20px;top:624px;width:985px;height:20px;background:linear-gradient(#ece9d8 0,#ece9d8 80%,#e0dccb 85%,#d2cebe 92%,#c6c2b2 100%);"></div>
<div class="r" style="left:20px;top:644px;width:985px;height:20px;background:#ececec;"></div>
<div class="r" style="left:20px;top:664px;width:985px;height:20px;background:#fff;"></div>
<div class="r" style="left:20px;top:684px;width:985px;height:20px;background:#316ac5;"></div>
<div class="r" style="left:20px;top:704px;width:985px;height:10px;background:#fff;"></div>
<div class="r" style="left:20px;top:663px;width:985px;height:1px;background:#d4d4d4;"></div>
<div class="r" style="left:20px;top:683px;width:985px;height:1px;background:#d4d4d4;"></div>
<div class="r" style="left:20px;top:703px;width:985px;height:1px;background:#316ac5;"></div>
<div class="r" style="left:20px;top:663px;width:985px;height:1px;background:#d8d8d8;"></div>
<div class="r" style="left:115px;top:644px;width:1px;height:70px;background:#c8c8c8;"></div>
<div class="r" style="left:115px;top:627px;width:1px;height:13px;background:#bcb9a6;"></div>
<div class="r" style="left:116px;top:627px;width:1px;height:13px;background:#fff;"></div>
<div class="r" style="left:280px;top:644px;width:1px;height:70px;background:#c8c8c8;"></div>
<div class="r" style="left:280px;top:627px;width:1px;height:13px;background:#bcb9a6;"></div>
<div class="r" style="left:281px;top:627px;width:1px;height:13px;background:#fff;"></div>
<div class="r" style="left:346px;top:644px;width:1px;height:70px;background:#c8c8c8;"></div>
<div class="r" style="left:346px;top:627px;width:1px;height:13px;background:#bcb9a6;"></div>
<div class="r" style="left:347px;top:627px;width:1px;height:13px;background:#fff;"></div>
<div class="r" style="left:399px;top:644px;width:1px;height:70px;background:#c8c8c8;"></div>
<div class="r" style="left:399px;top:627px;width:1px;height:13px;background:#bcb9a6;"></div>
<div class="r" style="left:400px;top:627px;width:1px;height:13px;background:#fff;"></div>
<div class="r" style="left:466px;top:644px;width:1px;height:70px;background:#c8c8c8;"></div>
<div class="r" style="left:466px;top:627px;width:1px;height:13px;background:#bcb9a6;"></div>
<div class="r" style="left:467px;top:627px;width:1px;height:13px;background:#fff;"></div>
<div class="r" style="left:541px;top:644px;width:1px;height:70px;background:#c8c8c8;"></div>
<div class="r" style="left:541px;top:627px;width:1px;height:13px;background:#bcb9a6;"></div>
<div class="r" style="left:542px;top:627px;width:1px;height:13px;background:#fff;"></div>
<div class="r" style="left:616px;top:644px;width:1px;height:70px;background:#c8c8c8;"></div>
<div class="r" style="left:616px;top:627px;width:1px;height:13px;background:#bcb9a6;"></div>
<div class="r" style="left:617px;top:627px;width:1px;height:13px;background:#fff;"></div>
<div class="r" style="left:691px;top:644px;width:1px;height:70px;background:#c8c8c8;"></div>
<div class="r" style="left:691px;top:627px;width:1px;height:13px;background:#bcb9a6;"></div>
<div class="r" style="left:692px;top:627px;width:1px;height:13px;background:#fff;"></div>
<div class="r" style="left:766px;top:644px;width:1px;height:70px;background:#c8c8c8;"></div>
<div class="r" style="left:766px;top:627px;width:1px;height:13px;background:#bcb9a6;"></div>
<div class="r" style="left:767px;top:627px;width:1px;height:13px;background:#fff;"></div>
<div class="r" style="left:841px;top:644px;width:1px;height:70px;background:#c8c8c8;"></div>
<div class="r" style="left:841px;top:627px;width:1px;height:13px;background:#bcb9a6;"></div>
<div class="r" style="left:842px;top:627px;width:1px;height:13px;background:#fff;"></div>
<div class="r" style="left:916px;top:644px;width:1px;height:70px;background:#c8c8c8;"></div>
<div class="r" style="left:916px;top:627px;width:1px;height:13px;background:#bcb9a6;"></div>
<div class="r" style="left:917px;top:627px;width:1px;height:13px;background:#fff;"></div>
<div class="r" style="left:1003px;top:627px;width:1px;height:13px;background:#bcb9a6;"></div>
<div class="r" style="left:1004px;top:627px;width:1px;height:13px;background:#fff;"></div>
<div class="r" style="left:543px;top:645px;width:73px;height:18px;background:#ffff80;"></div>
<span class="t" style="left:28.60px;top:628px;font-size:11px;color:#000;letter-spacing:-0.195px;">Orden</span>
<span class="t" style="left:240.50px;top:628px;font-size:11px;color:#000;letter-spacing:-0.295px;">Tiempo</span>
<span class="t" style="left:322.20px;top:628px;font-size:11px;color:#000;letter-spacing:-0.123px;">Tipo</span>
<span class="t" style="left:357.30px;top:628px;font-size:11px;color:#000;letter-spacing:0.160px;">Volu...</span>
<span class="t" style="left:409.00px;top:628px;font-size:11px;color:#000;letter-spacing:-0.220px;">Símb...</span>
<svg style="left:457px;top:630px" width="8" height="8"><path d="M.5 7.500L4 .8l3.500 6.700z" fill="none" stroke="#fff"/><path d="M.5 7.500L4 .8" stroke="#aca899" fill="none"/></svg>
<span class="t" style="left:507.30px;top:628px;font-size:11px;color:#000;letter-spacing:-0.363px;">Precio</span>
<span class="t" style="left:589.70px;top:628px;font-size:11px;color:#000;letter-spacing:-0.325px;">S / L</span>
<span class="t" style="left:665.20px;top:628px;font-size:11px;color:#000;letter-spacing:-0.305px;">T / P</span>
<span class="t" style="left:732.30px;top:628px;font-size:11px;color:#000;letter-spacing:-0.363px;">Precio</span>
<span class="t" style="left:794.30px;top:628px;font-size:11px;color:#000;letter-spacing:-0.481px;">Comisión</span>
<span class="t" style="left:885.20px;top:628px;font-size:11px;color:#000;letter-spacing:-0.504px;">Swap</span>
<span class="t" style="left:950.70px;top:628px;font-size:11px;color:#000;letter-spacing:-0.275px;">Beneficios</span>
<span class="t" style="left:44.60px;top:648px;font-size:11px;color:#000;letter-spacing:-0.155px;">25410055</span>
<span class="t" style="left:192.20px;top:648px;font-size:11px;color:#000;letter-spacing:-0.021px;">2010.08.24 15:23</span>
<span class="t" style="left:325.50px;top:648px;font-size:11px;color:#000;letter-spacing:0.088px;">buy</span>
<span class="t" style="left:375.20px;top:648px;font-size:11px;color:#000;letter-spacing:-0.027px;">0.10</span>
<span class="t" style="left:452.50px;top:648px;font-size:11px;color:#000;letter-spacing:-0.002px;">oil</span>
<span class="t" style="left:511.20px;top:648px;font-size:11px;color:#000;letter-spacing:-0.045px;">72.61</span>
<span class="t" style="left:586.20px;top:648px;font-size:11px;color:#000;letter-spacing:-0.045px;">80.97</span>
<span class="t" style="left:667.20px;top:648px;font-size:11px;color:#000;letter-spacing:-0.027px;">0.00</span>
<span class="t" style="left:736.20px;top:648px;font-size:11px;color:#000;letter-spacing:-0.045px;">83.34</span>
<span class="t" style="left:817.20px;top:648px;font-size:11px;color:#000;letter-spacing:-0.027px;">0.00</span>
<span class="t" style="left:882.20px;top:648px;font-size:11px;color:#000;letter-spacing:0.018px;">-39.84</span>
<span class="t" style="left:977.50px;top:648px;font-size:11px;color:#000;letter-spacing:-0.118px;">1073</span>
<span class="t" style="left:44.60px;top:668px;font-size:11px;color:#000;letter-spacing:-0.155px;">26425109</span>
<span class="t" style="left:192.20px;top:668px;font-size:11px;color:#000;letter-spacing:-0.021px;">2010.10.01 16:14</span>
<span class="t" style="left:326.50px;top:668px;font-size:11px;color:#000;letter-spacing:0.123px;">sell</span>
<span class="t" style="left:375.20px;top:668px;font-size:11px;color:#000;letter-spacing:-0.027px;">0.10</span>
<span class="t" style="left:452.50px;top:668px;font-size:11px;color:#000;letter-spacing:-0.002px;">oil</span>
<span class="t" style="left:511.20px;top:668px;font-size:11px;color:#000;letter-spacing:-0.045px;">83.21</span>
<span class="t" style="left:592.20px;top:668px;font-size:11px;color:#000;letter-spacing:-0.027px;">0.00</span>
<span class="t" style="left:661.20px;top:668px;font-size:11px;color:#000;letter-spacing:-0.045px;">80.32</span>
<span class="t" style="left:736.20px;top:668px;font-size:11px;color:#000;letter-spacing:-0.045px;">83.41</span>
<span class="t" style="left:817.20px;top:668px;font-size:11px;color:#000;letter-spacing:-0.027px;">0.00</span>
<span class="t" style="left:888.20px;top:668px;font-size:11px;color:#000;letter-spacing:0.045px;">-5.44</span>
<span class="t" style="left:985.50px;top:668px;font-size:11px;color:#000;letter-spacing:0.034px;">-20</span>
<span class="t" style="left:44.60px;top:688px;font-size:11px;color:#fff;letter-spacing:-0.155px;">26538622</span>
<span class="t" style="left:192.20px;top:688px;font-size:11px;color:#fff;letter-spacing:-0.021px;">2010.10.06 19:43</span>
<span class="t" style="left:326.50px;top:688px;font-size:11px;color:#fff;letter-spacing:0.123px;">sell</span>
<span class="t" style="left:375.20px;top:688px;font-size:11px;color:#fff;letter-spacing:-0.027px;">0.10</span>
<span class="t" style="left:452.50px;top:688px;font-size:11px;color:#fff;letter-spacing:-0.002px;">oil</span>
<span class="t" style="left:511.20px;top:688px;font-size:11px;color:#fff;letter-spacing:-0.045px;">85.24</span>
<span class="t" style="left:592.20px;top:688px;font-size:11px;color:#fff;letter-spacing:-0.027px;">0.00</span>
<span class="t" style="left:667.20px;top:688px;font-size:11px;color:#fff;letter-spacing:-0.027px;">0.00</span>
<span class="t" style="left:736.20px;top:688px;font-size:11px;color:#fff;letter-spacing:-0.045px;">83.41</span>
<span class="t" style="left:817.20px;top:688px;font-size:11px;color:#fff;letter-spacing:-0.027px;">0.00</span>
<span class="t" style="left:888.20px;top:688px;font-size:11px;color:#fff;letter-spacing:0.045px;">-0.92</span>
<span class="t" style="left:983.50px;top:688px;font-size:11px;color:#fff;letter-spacing:-0.118px;">183</span>
<div class="r" style="left:20px;top:704px;width:985px;height:10px;overflow:hidden">
<span class="t" style="left:24.60px;top:4px;font-size:11px;color:#000;letter-spacing:-0.155px;">26123847</span>
<span class="t" style="left:172.20px;top:4px;font-size:11px;color:#000;letter-spacing:-0.021px;">2010.09.23 12:33</span>
<span class="t" style="left:305.50px;top:4px;font-size:11px;color:#000;letter-spacing:0.088px;">buy</span>
<span class="t" style="left:355.20px;top:4px;font-size:11px;color:#000;letter-spacing:-0.027px;">0.10</span>
<span class="t" style="left:407.50px;top:4px;font-size:11px;color:#000;letter-spacing:0.598px;">usdchf</span>
<span class="t" style="left:485.20px;top:4px;font-size:11px;color:#000;letter-spacing:-0.058px;">0.9888</span>
<span class="t" style="left:560.20px;top:4px;font-size:11px;color:#000;letter-spacing:-0.058px;">0.9512</span>
<span class="t" style="left:635.20px;top:4px;font-size:11px;color:#000;letter-spacing:-0.058px;">0.0000</span>
<span class="t" style="left:710.20px;top:4px;font-size:11px;color:#000;letter-spacing:-0.058px;">0.9685</span>
<span class="t" style="left:797.20px;top:4px;font-size:11px;color:#000;letter-spacing:-0.027px;">0.00</span>
<span class="t" style="left:872.20px;top:4px;font-size:11px;color:#000;letter-spacing:-0.027px;">5.74</span>
<span class="t" style="left:963.50px;top:4px;font-size:11px;color:#000;letter-spacing:-0.118px;">293</span>
</div>
<svg style="left:23px;top:646px" width="15" height="17" viewBox="0 0 15 17"><path d="M1.500 1.500h6.500l3 3v9h-9.500z" fill="#fff" stroke="#555"/><path d="M8 1.500v3h3" fill="#e8e8e8" stroke="#555"/><path d="M3 4.500h4M5 4.500v4" stroke="#333" stroke-width="1"/><circle cx="10.500" cy="12.500" r="3" fill="#2a7de1" stroke="#1550a8" stroke-width=".8"/></svg>
<svg style="left:23px;top:666px" width="15" height="17" viewBox="0 0 15 17"><path d="M1.500 1.500h6.500l3 3v9h-9.500z" fill="#fff" stroke="#555"/><path d="M8 1.500v3h3" fill="#e8e8e8" stroke="#555"/><circle cx="10.500" cy="12.500" r="3" fill="#e2571e" stroke="#9c3208" stroke-width=".8"/></svg>
<svg style="left:23px;top:686px" width="15" height="17" viewBox="0 0 15 17"><path d="M1.500 1.500h6.500l3 3v9h-9.500z" fill="#fff" stroke="#555"/><path d="M8 1.500v3h3" fill="#e8e8e8" stroke="#555"/><circle cx="10.500" cy="12.500" r="3" fill="#e2571e" stroke="#9c3208" stroke-width=".8"/></svg>
<div class="r" style="left:20px;top:704px;width:30px;height:10px;overflow:hidden"><svg style="left:3px;top:2px" width="15" height="17" viewBox="0 0 15 17"><path d="M1.500 1.500h6.500l3 3v9h-9.500z" fill="#fff" stroke="#555"/><path d="M8 1.500v3h3" fill="#e8e8e8" stroke="#555"/></svg></div>
<div class="r" style="left:1005px;top:624px;width:20px;height:90px;background:linear-gradient(90deg,#f1efe8,#fefefb 60%,#f6f4ea);"></div>
<div class="r" style="left:1006px;top:624px;width:17px;height:18px;box-sizing:border-box;border:1px solid #fff;border-radius:3px;background:linear-gradient(135deg,#cfdcfd,#b9cbf6);box-shadow:1px 1px 0 #a6baf0"></div>
<svg style="left:1010px;top:630px" width="9" height="6"><path d="M1 5l3.500-3.500L8 5" stroke="#4d6185" stroke-width="1.800" fill="none"/></svg>
<div class="r" style="left:1006px;top:649px;width:17px;height:16px;box-sizing:border-box;border:1px solid #fff;border-radius:3px;background:linear-gradient(135deg,#cfdcfd,#b9cbf6);box-shadow:1px 1px 0 #a6baf0"></div>
<div class="r" style="left:1011px;top:654px;width:7px;height:7px;background:repeating-linear-gradient(#eef3ff 0 1px,#8ea6dc 1px 2px)"></div>
<div class="r" style="left:1006px;top:696px;width:17px;height:17px;box-sizing:border-box;border:1px solid #fff;border-radius:3px;background:linear-gradient(135deg,#cfdcfd,#b9cbf6);box-shadow:1px 1px 0 #a6baf0"></div>
<svg style="left:1010px;top:702px" width="9" height="6"><path d="M1 1l3.500 3.500L8 1" stroke="#4d6185" stroke-width="1.800" fill="none"/></svg>
<div class="r" style="left:1025px;top:623px;width:1px;height:92px;background:#fff;"></div>
<div class="r" style="left:101px;top:714px;width:923px;height:1px;background:#000;"></div>
<div class="r" style="left:22px;top:714px;width:80px;height:18px;box-sizing:border-box;background:#fff;border:1px solid #000;border-top:none;box-shadow:1px 1px 0 #8a8a80"></div>
<div class="r" style="left:20px;top:705px;width:2px;height:10px;background:#fff;"></div>
<span class="t" style="left:31.70px;top:717px;font-size:11px;color:#000;letter-spacing:-0.306px;">Operaciones</span>
<span class="t" style="left:111.70px;top:717px;font-size:11px;color:#6a6659;letter-spacing:-0.165px;">Historial de cuentas</span>
<span class="t" style="left:226.00px;top:717px;font-size:11px;color:#6a6659;letter-spacing:-0.367px;">Avisos</span>
<span class="t" style="left:276.70px;top:717px;font-size:11px;color:#6a6659;letter-spacing:-0.578px;">Buzón</span>
<span class="t" style="left:325.00px;top:717px;font-size:11px;color:#6a6659;letter-spacing:-0.239px;">Diario</span>
<div class="r" style="left:216px;top:718px;width:1px;height:12px;background:#6d6d6d;"></div>
<div class="r" style="left:267px;top:718px;width:1px;height:12px;background:#6d6d6d;"></div>
<div class="r" style="left:316px;top:718px;width:1px;height:12px;background:#6d6d6d;"></div>
<div class="r" style="left:364px;top:718px;width:1px;height:12px;background:#6d6d6d;"></div>
<div class="r" style="left:19px;top:734px;width:1005px;height:1px;background:#fff;"></div>
<div class="r" style="left:6px;top:736px;width:1021px;height:1px;background:#aca899;"></div>
<div class="r" style="left:6px;top:737px;width:1021px;height:1px;background:#fff;"></div>
<span class="t" style="left:5.70px;top:744px;font-size:11px;color:#000;letter-spacing:-0.123px;">Para obtener ayuda, pulse F1</span>
<span class="t" style="left:209.30px;top:744px;font-size:11px;color:#000;letter-spacing:0.021px;">Default</span>
<div class="r" style="left:204px;top:742px;width:1px;height:16px;background:#aca899;"></div>
<div class="r" style="left:205px;top:742px;width:1px;height:16px;background:#fff;"></div>
<div class="r" style="left:337px;top:742px;width:1px;height:16px;background:#aca899;"></div>
<div class="r" style="left:338px;top:742px;width:1px;height:16px;background:#fff;"></div>
<div class="r" style="left:455px;top:742px;width:1px;height:16px;background:#aca899;"></div>
<div class="r" style="left:456px;top:742px;width:1px;height:16px;background:#fff;"></div>
<div class="r" style="left:539px;top:742px;width:1px;height:16px;background:#aca899;"></div>
<div class="r" style="left:540px;top:742px;width:1px;height:16px;background:#fff;"></div>
<div class="r" style="left:622px;top:742px;width:1px;height:16px;background:#aca899;"></div>
<div class="r" style="left:623px;top:742px;width:1px;height:16px;background:#fff;"></div>
<div class="r" style="left:703px;top:742px;width:1px;height:16px;background:#aca899;"></div>
<div class="r" style="left:704px;top:742px;width:1px;height:16px;background:#fff;"></div>
<div class="r" style="left:786px;top:742px;width:1px;height:16px;background:#aca899;"></div>
<div class="r" style="left:787px;top:742px;width:1px;height:16px;background:#fff;"></div>
<div class="r" style="left:867px;top:742px;width:1px;height:16px;background:#aca899;"></div>
<div class="r" style="left:868px;top:742px;width:1px;height:16px;background:#fff;"></div>
<svg style="left:872px;top:744px" width="24" height="11" shape-rendering="crispEdges"><rect x="0" y="0" width="2" height="10" fill="#5f7d12"/><rect x="0" y="10" width="2" height="1" fill="#17385c"/><rect x="3" y="0" width="2" height="9" fill="#5f7d12"/><rect x="3" y="9" width="2" height="2" fill="#17385c"/><rect x="6" y="0" width="2" height="7" fill="#5f7d12"/><rect x="6" y="7" width="2" height="4" fill="#17385c"/><rect x="9" y="0" width="2" height="6" fill="#5f7d12"/><rect x="9" y="6" width="2" height="5" fill="#17385c"/><rect x="12" y="0" width="2" height="5" fill="#5f7d12"/><rect x="12" y="5" width="2" height="6" fill="#17385c"/><rect x="15" y="0" width="2" height="3" fill="#5f7d12"/><rect x="15" y="3" width="2" height="8" fill="#17385c"/><rect x="18" y="0" width="2" height="2" fill="#5f7d12"/><rect x="18" y="2" width="2" height="9" fill="#17385c"/><rect x="21" y="0" width="2" height="1" fill="#5f7d12"/><rect x="21" y="1" width="2" height="10" fill="#17385c"/></svg>
<span class="t" style="left:918.00px;top:744px;font-size:11px;color:#000;letter-spacing:-0.113px;">5775/7 kb</span>
<svg style="left:1013px;top:745px" width="14" height="14"><path d="M1 14L14 1M5 14l9-9M9 14l5-5" stroke="#aca899" stroke-width="1.200"/><path d="M2 14L14 2M6 14l8-8M10 14l4-4" stroke="#fff" stroke-width=".8"/></svg>
</div></body></html>
